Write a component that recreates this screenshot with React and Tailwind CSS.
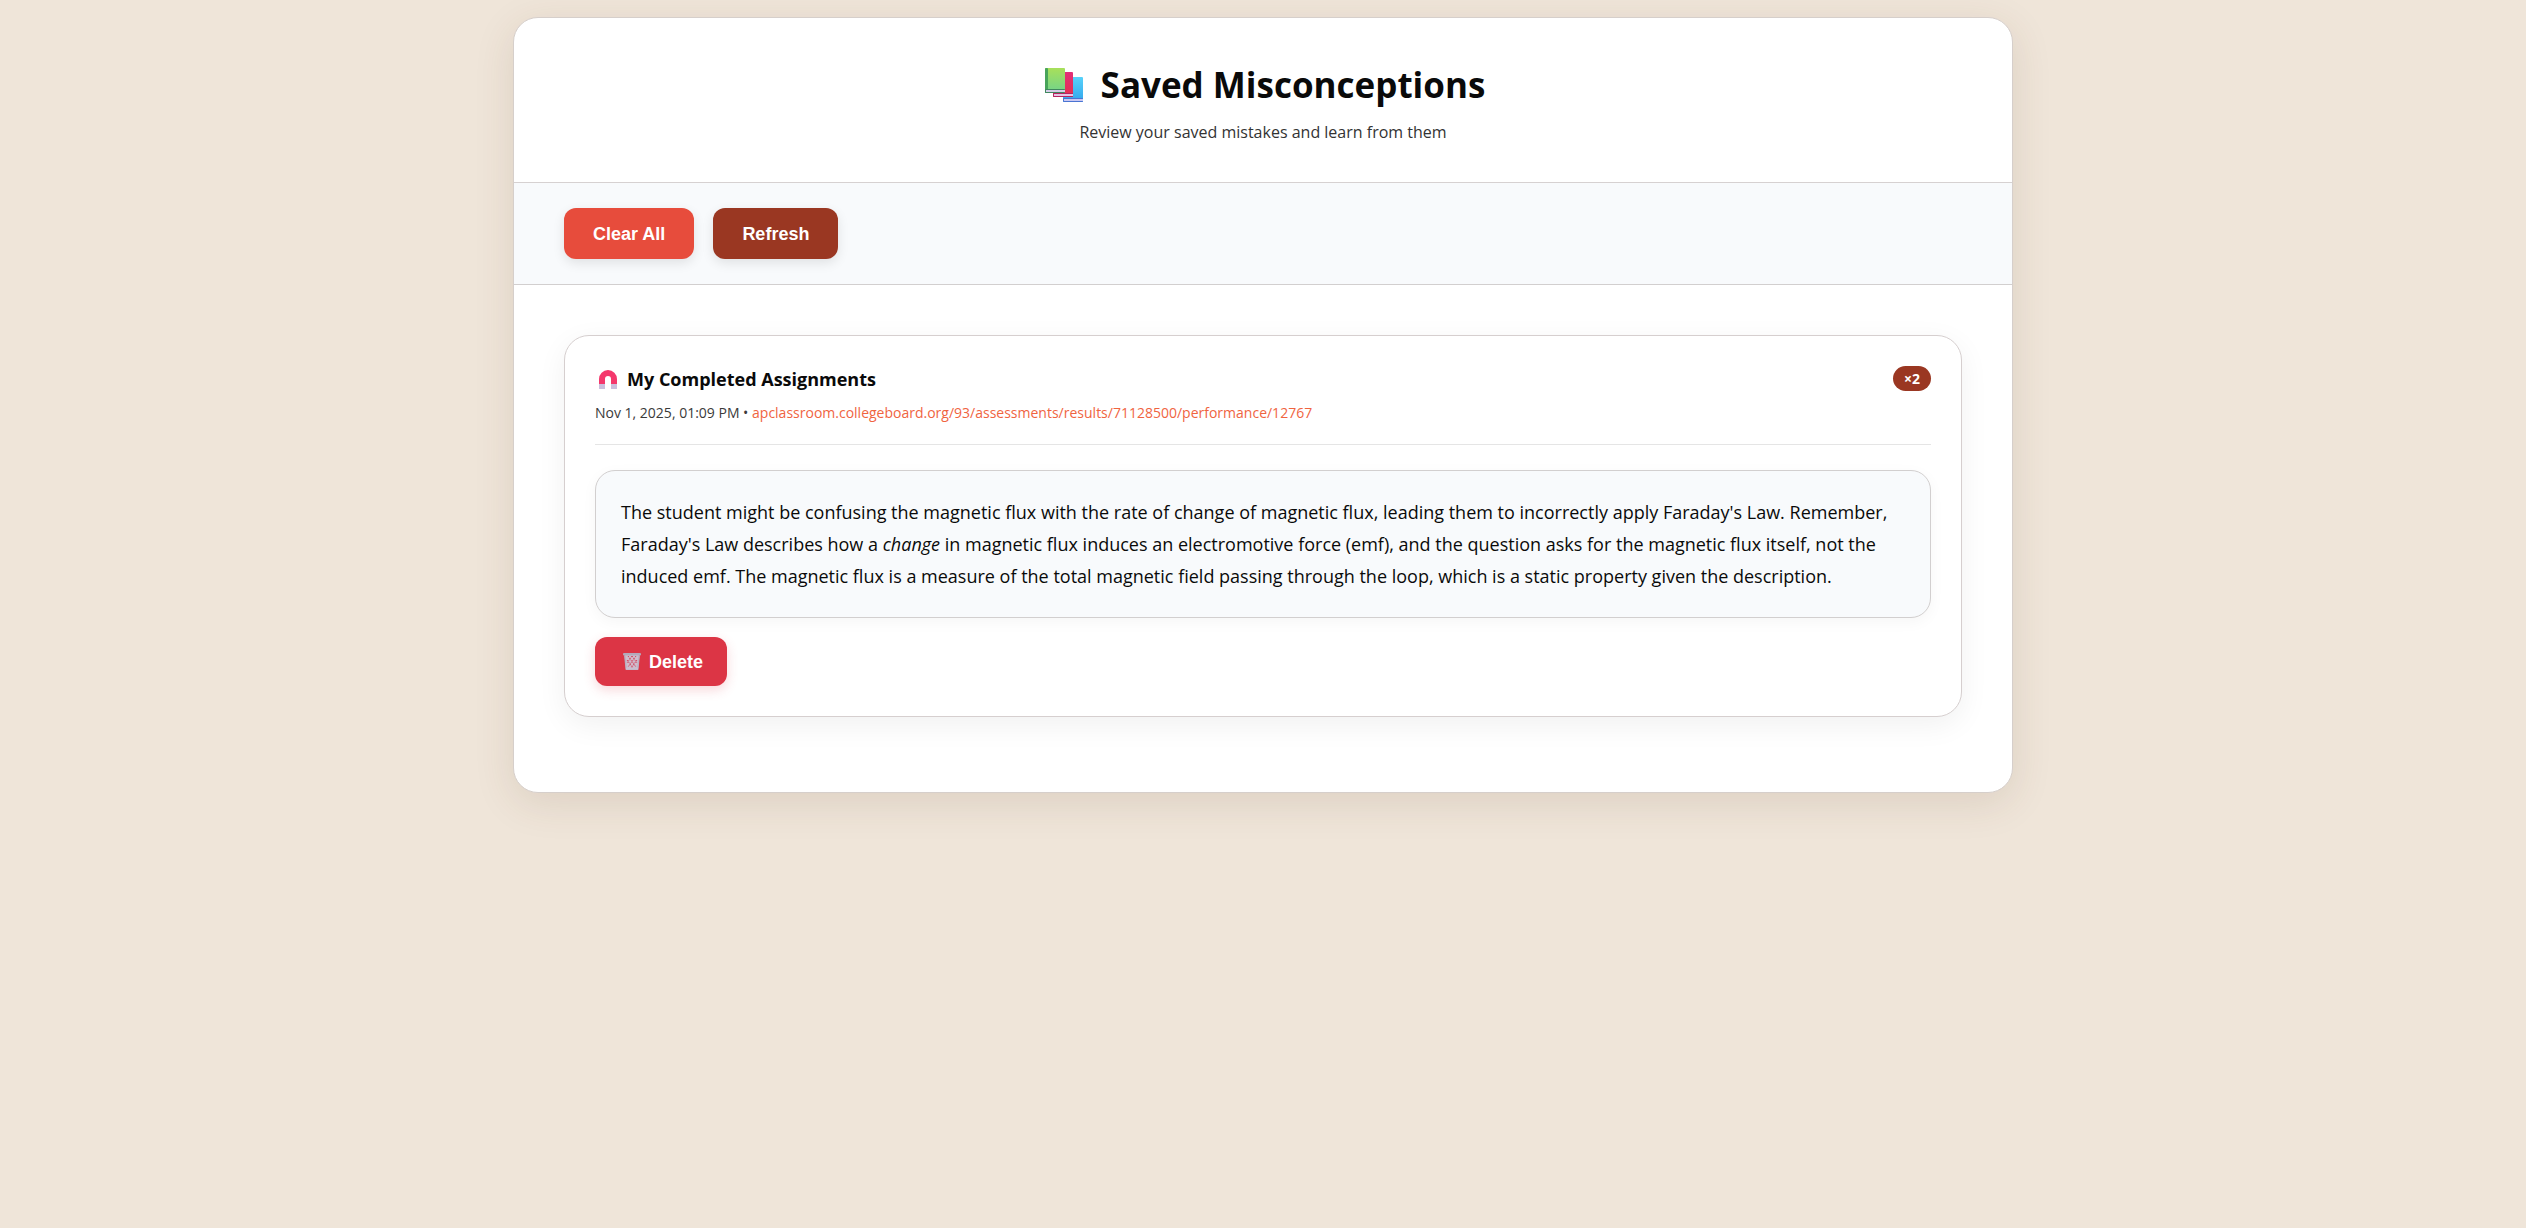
const misconceptions = [
  {
    id: 1,
    title: 'My Completed Assignments',
    date: 'Nov 1, 2025, 01:09 PM',
    url: 'apclassroom.collegeboard.org/93/assessments/results/71128500/performance/12767',
    count: 2,
    body: (
      <>
        The student might be confusing the magnetic flux with the rate of change of magnetic flux,
        leading them to incorrectly apply Faraday's Law. Remember, Faraday's Law describes how a{' '}
        <em>change</em> in magnetic flux induces an electromotive force (emf), and the question asks
        for the magnetic flux itself, not the induced emf. The magnetic flux is a measure of the
        total magnetic field passing through the loop, which is a static property given the
        description.
      </>
    ),
  },
]

function BooksIcon({ className }) {
  return (
    <svg viewBox="0 0 38 34" className={className} aria-hidden="true">
      <defs>
        <linearGradient id="book-green" x1="0" y1="0" x2="0" y2="1">
          <stop offset="0" stopColor="#a8e05a" />
          <stop offset="1" stopColor="#70d38c" />
        </linearGradient>
        <linearGradient id="book-red" x1="0" y1="0" x2="0" y2="1">
          <stop offset="0" stopColor="#e22f78" />
          <stop offset="1" stopColor="#e5304d" />
        </linearGradient>
        <linearGradient id="book-blue" x1="0" y1="0" x2="0" y2="1">
          <stop offset="0" stopColor="#58d2fa" />
          <stop offset="1" stopColor="#31a5ec" />
        </linearGradient>
      </defs>
      <rect x="18" y="9" width="20" height="25" rx="1" fill="url(#book-blue)" />
      <rect x="18" y="30" width="20" height="4" rx="1" fill="#4a74d2" />
      <rect x="19" y="31" width="19" height="2" fill="#c9c8f2" />
      <rect x="8" y="4" width="20" height="25" rx="1" fill="url(#book-red)" />
      <rect x="8" y="25" width="20" height="4" rx="1" fill="#b52460" />
      <rect x="9" y="26" width="19" height="2" fill="#e6c3e6" />
      <rect x="0" y="0" width="20" height="25" rx="1" fill="url(#book-green)" />
      <rect x="0" y="0" width="3" height="25" rx="1" fill="#48a45a" />
      <rect x="0" y="21" width="20" height="4" rx="1" fill="#40875f" />
      <rect x="1" y="22" width="19" height="2" fill="#d5cde8" />
    </svg>
  )
}

function MagnetIcon({ className }) {
  return (
    <svg viewBox="0 0 18 19" className={className} aria-hidden="true">
      <path d="M0 14V9a9 9 0 0 1 18 0v5h-6V9a3 3 0 0 0-6 0v5z" fill="#f4386c" />
      <path d="M0 14h6v5H0zM12 14h6v5h-6z" fill="#cbbfdc" />
    </svg>
  )
}

function TrashIcon({ className }) {
  return (
    <svg viewBox="0 0 18 17" className={className} aria-hidden="true">
      <path d="M1.5 2h15L15 16.5H3z" fill="#d0bccb" />
      <path
        d="M5 3l8 11M9 3l5 7M4 7l6 8M13 3L5 14M9 3L4 10M14 7l-6 8"
        stroke="#d24660"
        strokeWidth="1"
        strokeDasharray="1.6 1"
        fill="none"
      />
      <path d="M1.8 2.5L3.2 16h11.6L16.2 2.5" stroke="#b9b0c2" strokeWidth="1.4" fill="none" />
      <rect x="0" y="0" width="18" height="2.4" rx="1" fill="#b3a9bb" />
      <rect x="3" y="14.6" width="12" height="2.2" rx="0.6" fill="#c9c0d0" />
    </svg>
  )
}

function MisconceptionCard({ item }) {
  return (
    <article className="mb-[25px] rounded-[25px] border border-[#d6cfcf] bg-white p-[30px] shadow-[0_8px_30px_rgba(0,0,0,0.06)]">
      <header className="mb-[25px] border-b border-[#e5e5e5] pb-5">
        <div className="flex items-start justify-between">
          <h2 className="flex items-center gap-2.5 pl-1 text-lg font-bold leading-[26px] text-[#0a0a0a]">
            <MagnetIcon className="h-[19px] w-[18px]" />
            {item.title}
          </h2>
          <span className="rounded-full bg-[#9a3722] px-[11px] text-sm font-bold leading-[25px] text-white">
            ×{item.count}
          </span>
        </div>
        <p className="mt-2.5 text-sm leading-[22px] text-[#3a3a3a]">
          {item.date} •{' '}
          <a href={`https://${item.url}`} className="text-[#f0643f]">
            {item.url}
          </a>
        </p>
      </header>

      <p className="rounded-[20px] border border-[#d2cfcf] bg-[#f8fafc] p-[25px] text-lg leading-8 text-[#0a0a0a] shadow-[0_4px_15px_rgba(0,0,0,0.04)]">
        {item.body}
      </p>

      <button
        type="button"
        className="mt-[19px] flex h-[49px] items-center gap-2 rounded-xl bg-[#dc3545] pr-6 pl-7 font-['Liberation_Sans',Arial,sans-serif] text-lg font-bold text-white shadow-[0_4px_12px_rgba(220,53,69,0.2)]"
      >
        <TrashIcon className="h-[17px] w-[18px]" />
        Delete
      </button>
    </article>
  )
}

export default function App() {
  return (
    <div className="min-h-screen bg-[#efe5d9] px-5 py-[17px] font-['Open_Sans','Noto_Sans',sans-serif]">
      <main className="mx-auto max-w-[1500px] overflow-hidden rounded-[25px] border border-[#d6cfcb] bg-white shadow-[0_10px_40px_rgba(90,60,30,0.12)]">
        <header className="border-b border-[#d6d1d1] px-[50px] pt-[42px] pb-[38px] text-center">
          <h1 className="flex items-center justify-center gap-[18px] pl-1 text-[35px] font-bold leading-[50px] text-[#0a0a0a]">
            <BooksIcon className="h-[34px] w-[38px]" />
            Saved Misconceptions
          </h1>
          <p className="mt-2.5 text-base leading-6 text-[#333333]">
            Review your saved mistakes and learn from them
          </p>
        </header>

        <div className="flex gap-[19px] border-b border-[#d2cfcf] bg-[#f8fafc] px-[50px] py-[25px] font-['Liberation_Sans',Arial,sans-serif] text-lg font-bold text-white">
          <button
            type="button"
            className="h-[51px] rounded-xl bg-[#e74c3c] px-[29px] shadow-[0_4px_12px_rgba(0,0,0,0.1)]"
          >
            Clear All
          </button>
          <button
            type="button"
            className="h-[51px] rounded-xl bg-[#9a3722] px-[29px] shadow-[0_4px_12px_rgba(0,0,0,0.1)]"
          >
            Refresh
          </button>
        </div>

        <section className="p-[50px]" aria-label="Saved misconceptions">
          {misconceptions.map((item) => (
            <MisconceptionCard key={item.id} item={item} />
          ))}
        </section>
      </main>
    </div>
  )
}
